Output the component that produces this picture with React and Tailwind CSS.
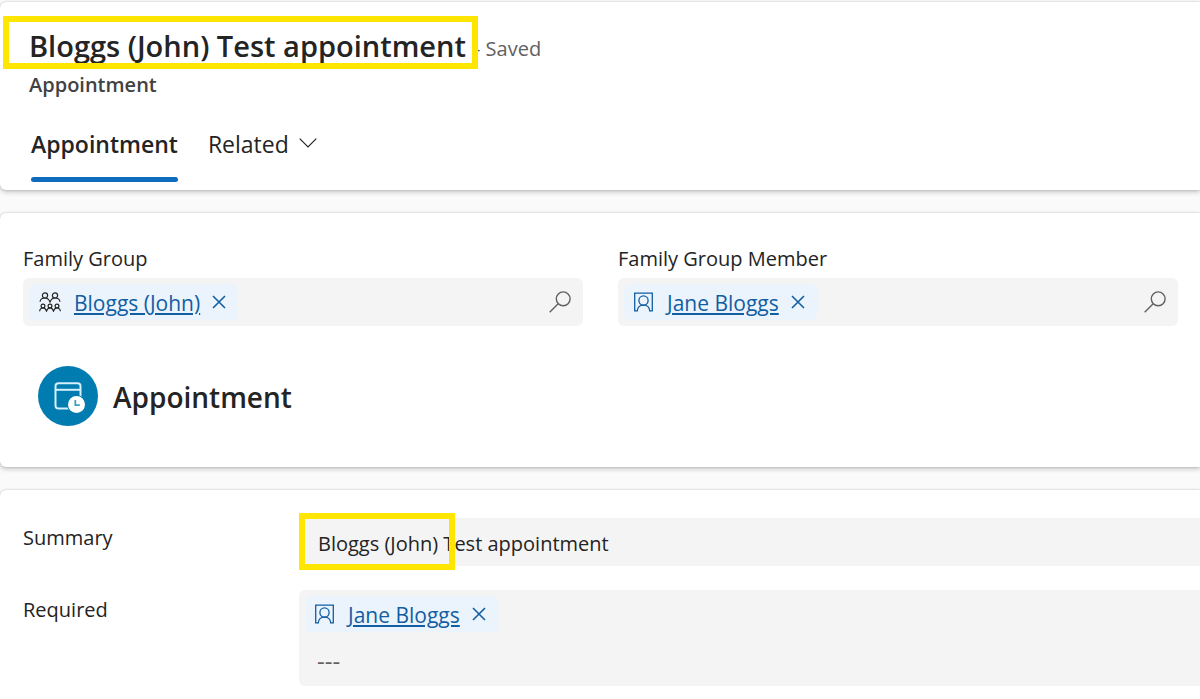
import { useState } from "react";

function FamilyIcon() {
  return (
    <svg viewBox="0 0 22 20" className="h-5 w-[22px] shrink-0" fill="none" stroke="#242424" strokeWidth="1.2" aria-hidden="true">
      <circle cx="6" cy="3.4" r="2.6" />
      <circle cx="16" cy="3.4" r="2.6" />
      <path d="M1 9.8C1.3 7.4 3.2 6 6 6s4 1.500 5 3.900C12 7.500 13.400 6 16 6s4.700 1.400 5 3.800" />
      <circle cx="4" cy="14" r="1.9" />
      <circle cx="11" cy="14" r="1.9" />
      <circle cx="18" cy="14" r="1.9" />
      <path d="M.6 19.300C.8 17.200 2.200 16 4 16s2.900 1.100 3.500 3c.6-1.900 1.700-3 3.500-3s2.900 1.100 3.500 3c.6-1.900 1.700-3 3.500-3s3.200 1.200 3.400 3.300" />
    </svg>
  );
}

function ContactIcon() {
  return (
    <svg viewBox="0 0 20 20" className="h-5 w-5 shrink-0" fill="none" stroke="#115ea3" strokeWidth="1.3" aria-hidden="true">
      <path d="M3.600 18.800H.7V1.200h17.600v17.600h-2.900" />
      <circle cx="9.500" cy="8.500" r="4.600" />
      <path d="M3.200 19.200c.3-3.900 2.500-6.100 6.300-6.100s6 2.200 6.300 6.100" />
    </svg>
  );
}

function SearchIcon() {
  return (
    <svg viewBox="0 0 22 22" className="h-[22px] w-[22px]" fill="none" stroke="#616161" strokeWidth="1.400" aria-hidden="true">
      <circle cx="14.200" cy="7.800" r="6.900" />
      <path d="M9.200 12.700L.7 21.200" />
    </svg>
  );
}

function AppointmentIcon() {
  return (
    <svg viewBox="0 0 60 60" className="h-[60px] w-[60px] shrink-0" fill="none" aria-hidden="true">
      <circle cx="30" cy="30" r="30" fill="#007cb0" />
      <rect x="17.500" y="17.300" width="25" height="25.200" rx="3" stroke="#d5f0fa" strokeWidth="2" />
      <path d="M17.500 23.800h25" stroke="#d5f0fa" strokeWidth="2" />
      <circle cx="38.500" cy="38.500" r="9.600" fill="#007cb0" />
      <circle cx="38.500" cy="38.500" r="8.500" fill="#fff" />
      <path d="M37.300 34v5.200h4.500" stroke="#3b9cc4" strokeWidth="1.700" />
    </svg>
  );
}

function Chip({ icon, name, onRemove }) {
  return (
    <div className="flex h-9 items-center rounded-md bg-[#ebf3fc] pl-2.5 pr-3">
      {icon}
      <a
        href="#"
        className="ml-[13px] pt-0.5 text-[21px] leading-7 text-[#115ea3] underline decoration-2 underline-offset-2"
      >
        {name}
      </a>
      <button
        type="button"
        aria-label={`Remove ${name}`}
        onClick={onRemove}
        className="ml-3 cursor-pointer"
      >
        <svg viewBox="0 0 14 14" className="h-3.5 w-3.5" fill="none" stroke="#115ea3" strokeWidth="1.6" aria-hidden="true">
          <path d="M1 1l12 12M13 1L1 13" />
        </svg>
      </button>
    </div>
  );
}

function LookupField({ label, icon, name }) {
  const [value, setValue] = useState(name);

  return (
    <div role="group" aria-label={label}>
      <p className="text-xl leading-7">{label}</p>
      <div className="mt-[5px] flex h-12 items-center justify-between rounded-md bg-[#f4f4f4] pl-1.5 pr-3">
        <div>
          {value && <Chip icon={icon} name={value} onRemove={() => setValue("")} />}
        </div>
        <button type="button" aria-label={`Search ${label}`} className="cursor-pointer">
          <SearchIcon />
        </button>
      </div>
    </div>
  );
}

const CARD =
  "bg-white shadow-[0_0_2px_rgba(0,0,0,0.2),0_2px_5px_rgba(0,0,0,0.22)]";

export default function App() {
  const [summary, setSummary] = useState("Bloggs (John) Test appointment");
  const [required, setRequired] = useState("Jane Bloggs");

  return (
    <main className="flex min-h-screen flex-col gap-[23px] overflow-hidden bg-[#fafafa] pt-0.5 font-['Open_Sans','Noto_Sans',sans-serif] text-[#242424]">
      {/* Record header */}
      <header className={`${CARD} rounded-l-md px-[29px] pb-2 pt-6`}>
        <div className="flex items-center">
          <div className="relative">
            <h1 className="text-[29px] font-semibold leading-10">
              Bloggs (John) Test appointment
            </h1>
            <div className="pointer-events-none absolute -bottom-[3px] -left-[26px] -right-3 -top-2.5 border-6 border-[#ffe600]" />
          </div>
          <span className="ml-2 mt-1.5 text-xl leading-7 text-[#616161]">- Saved</span>
        </div>
        <p className="mt-[5px] text-xl font-semibold leading-7 text-[#424242]">Appointment</p>

        {/* Tabs */}
        <div role="tablist" className="mt-[29px] flex gap-[30px] pl-0.5 text-[23px] leading-8">
          <button
            type="button"
            role="tab"
            aria-selected="true"
            className="cursor-pointer font-semibold"
          >
            Appointment
            <span className="mt-[17px] block h-[5px] rounded-full bg-[#0f6cbd]" />
          </button>
          <button
            type="button"
            role="tab"
            aria-selected="false"
            className="flex cursor-pointer items-center gap-2.5 self-start"
          >
            Related
            <svg viewBox="0 0 18 10" className="mb-0.5 h-2.5 w-[18px]" fill="none" stroke="#242424" strokeWidth="1.2" aria-hidden="true">
              <path d="M.7.7L9 9 17.300.7" />
            </svg>
          </button>
        </div>
      </header>

      {/* Family lookups */}
      <section className={`${CARD} rounded-l-md pb-[41px] pl-[23px] pr-[22px] pt-8`}>
        <div className="grid grid-cols-2 gap-[35px]">
          <LookupField label="Family Group" icon={<FamilyIcon />} name="Bloggs (John)" />
          <LookupField label="Family Group Member" icon={<ContactIcon />} name="Jane Bloggs" />
        </div>
        <div className="mt-10 flex items-center gap-[15px] pl-[15px]">
          <AppointmentIcon />
          <h2 className="pt-0.5 text-[28px] font-semibold leading-10">Appointment</h2>
        </div>
      </section>

      {/* Details */}
      <section className={`${CARD} grid flex-1 grid-cols-[252px_1fr] content-start gap-6 rounded-tl-md pl-[23px] pt-7 text-xl leading-7`}>
        <label htmlFor="summary" className="pt-1.5">
          Summary
        </label>
        <div className="relative">
          <input
            id="summary"
            value={summary}
            onChange={(e) => setSummary(e.target.value)}
            className="block h-12 w-full rounded-l-md bg-[#f4f4f4] px-[19px] pt-0.5 outline-none"
          />
          <div className="pointer-events-none absolute -bottom-1 -top-[5px] left-0 w-[156px] border-6 border-[#ffe600]" />
        </div>

        <label htmlFor="required" className="pt-1.5">
          Required
        </label>
        <div className="h-24 rounded-l-md bg-[#f4f4f4] p-1.5">
          <div className="flex h-9">
            {required && (
              <Chip icon={<ContactIcon />} name={required} onRemove={() => setRequired("")} />
            )}
          </div>
          <input
            id="required"
            placeholder="---"
            className="mt-2.5 block h-9 w-full bg-transparent px-3 text-2xl outline-none placeholder:text-[#616161]"
          />
        </div>
      </section>
    </main>
  );
}
